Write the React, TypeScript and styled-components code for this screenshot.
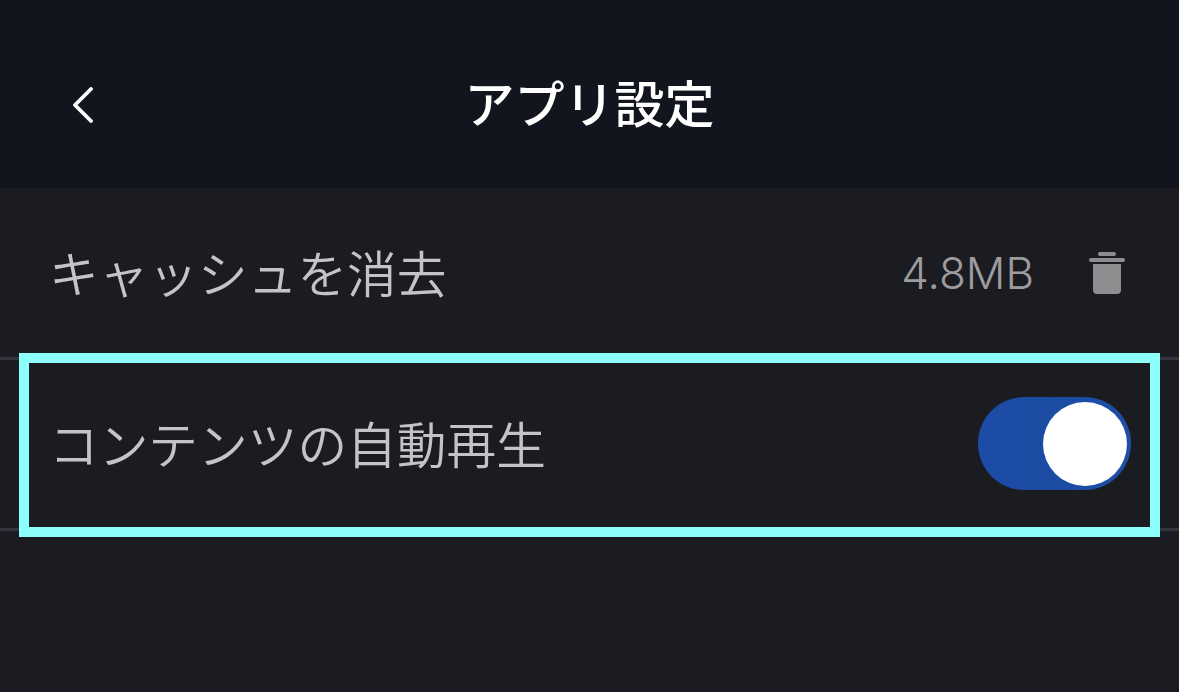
import React from "react";
import styled, { createGlobalStyle } from "styled-components";

const GlobalStyle = createGlobalStyle`
  html, body {
    margin: 0;
    padding: 0;
    background: #1b1c21;
  }
  * {
    box-sizing: border-box;
  }
`;

const Screen = styled.div`
  position: relative;
  width: 1179px;
  height: 692px;
  overflow: hidden;
  background: #1b1c21;
  font-family: Inter, "Noto Sans CJK JP", sans-serif;
`;

const Header = styled.header`
  height: 188px;
  padding: 22px 73px 0;
  display: grid;
  grid-template-columns: 1fr auto 1fr;
  align-items: center;
  background: #12151d;
`;

const BackButton = styled.button`
  display: flex;
  justify-self: start;
  padding: 0;
  border: 0;
  background: none;
`;

const Title = styled.h1`
  margin: -8px 0 0;
  color: #fff;
  font-size: 50px;
  font-weight: 500;
`;

const Row = styled.div<{ $height: number }>`
  height: ${({ $height }) => $height}px;
  padding: 0 54px 0 49px;
  display: flex;
  align-items: center;
  justify-content: space-between;
  border-bottom: 3px solid #33343e;
`;

const Label = styled.span`
  margin-top: -4px;
  color: #c4c4c6;
  font-size: 49.7px;
  font-weight: 350;
`;

const Meta = styled.div`
  display: flex;
  align-items: center;
  gap: 55px;
`;

const Size = styled.span`
  color: #9c9c9f;
  font-size: 44px;
  font-weight: 300;
`;

const Toggle = styled.div`
  width: 153px;
  height: 93px;
  margin: -2px -6px 0 0;
  padding: 5px 4px 4px 0;
  display: flex;
  justify-content: flex-end;
  border-radius: 47px;
  background: linear-gradient(90deg, #1d4ca8 0%, #1c4ba3 45%, #1f4ea6 100%);
`;

const Knob = styled.div`
  width: 84px;
  height: 84px;
  border-radius: 50%;
  background: #fff;
`;

const Highlight = styled.div`
  position: absolute;
  left: 19px;
  top: 353px;
  width: 1141px;
  height: 184px;
  border: 10px solid #8cfffb;
`;

function TrashIcon() {
  return (
    <svg width="36" height="42" viewBox="0 0 36 42" fill="#8e8e91">
      <rect x="9" y="0" width="18" height="4" rx="2" />
      <rect x="0" y="6" width="36" height="4" rx="2" />
      <path d="M4 12h28v26a4 4 0 0 1-4 4H8a4 4 0 0 1-4-4z" />
    </svg>
  );
}

export default function App() {
  return (
    <>
      <GlobalStyle />
      <Screen>
        <Header>
          <BackButton aria-label="戻る">
            <svg width="20" height="36" viewBox="0 0 20 36" fill="none">
              <path
                d="M18 2 2 18l16 16"
                stroke="#fff"
                strokeWidth="3.8"
                strokeLinecap="round"
                strokeLinejoin="round"
              />
            </svg>
          </BackButton>
          <Title>アプリ設定</Title>
        </Header>
        <Row $height={172}>
          <Label>キャッシュを消去</Label>
          <Meta>
            <Size>4.8MB</Size>
            <TrashIcon />
          </Meta>
        </Row>
        <Row $height={171}>
          <Label>コンテンツの自動再生</Label>
          <Toggle>
            <Knob />
          </Toggle>
        </Row>
        <Highlight />
      </Screen>
    </>
  );
}
